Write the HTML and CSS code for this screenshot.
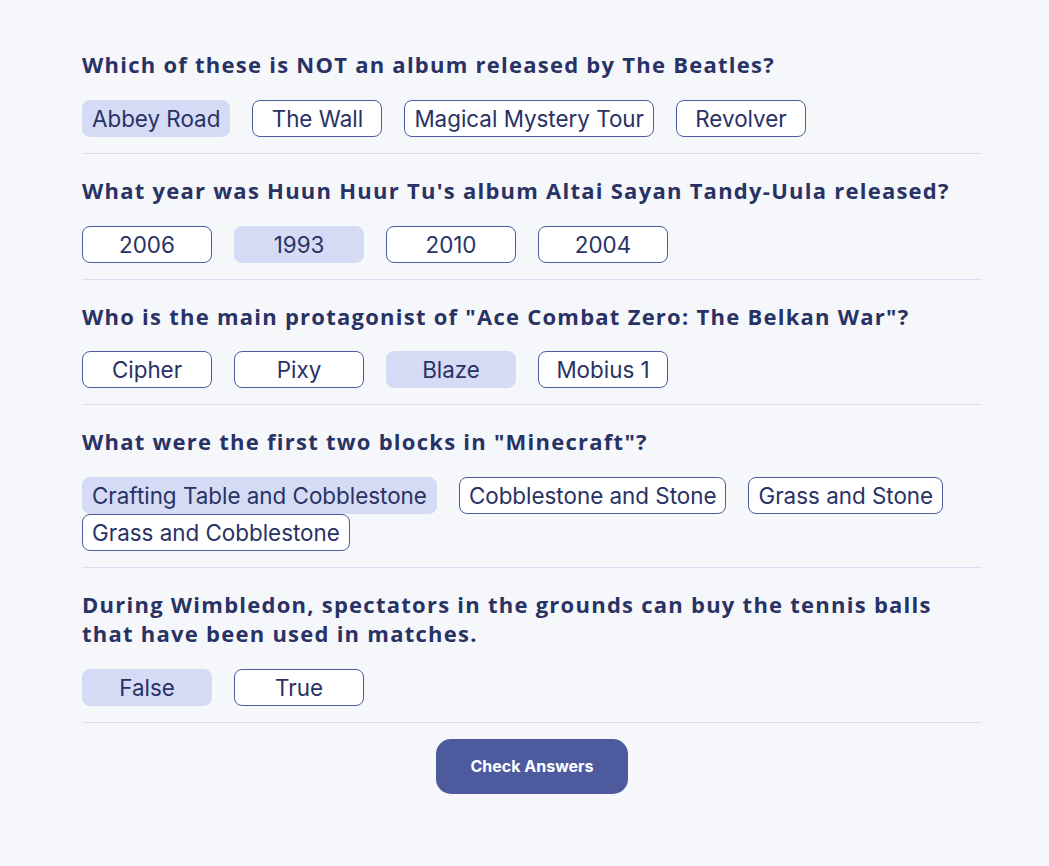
FILE: index.html
```html
<!DOCTYPE html>
<html>
<head>
<meta charset="utf-8">
<link rel="stylesheet" href="styles.css">
</head>
<body>
<main class="quiz">
  <section class="question">
    <h2 class="question-title">Which of these is NOT an album released by The Beatles?</h2>
    <div class="answers">
      <button class="answer selected">Abbey Road</button>
      <button class="answer">The Wall</button>
      <button class="answer">Magical Mystery Tour</button>
      <button class="answer">Revolver</button>
    </div>
  </section>
  <section class="question">
    <h2 class="question-title">What year was Huun Huur Tu's album Altai Sayan Tandy-Uula released?</h2>
    <div class="answers">
      <button class="answer">2006</button>
      <button class="answer selected">1993</button>
      <button class="answer">2010</button>
      <button class="answer">2004</button>
    </div>
  </section>
  <section class="question">
    <h2 class="question-title">Who is the main protagonist of "Ace Combat Zero: The Belkan War"?</h2>
    <div class="answers">
      <button class="answer">Cipher</button>
      <button class="answer">Pixy</button>
      <button class="answer selected">Blaze</button>
      <button class="answer">Mobius 1</button>
    </div>
  </section>
  <section class="question">
    <h2 class="question-title">What were the first two blocks in "Minecraft"?</h2>
    <div class="answers">
      <button class="answer selected">Crafting Table and Cobblestone</button>
      <button class="answer">Cobblestone and Stone</button>
      <button class="answer">Grass and Stone</button>
      <button class="answer">Grass and Cobblestone</button>
    </div>
  </section>
  <section class="question">
    <h2 class="question-title">During Wimbledon, spectators in the grounds can buy the tennis balls that have been used in matches.</h2>
    <div class="answers">
      <button class="answer selected">False</button>
      <button class="answer">True</button>
    </div>
  </section>
  <div class="actions">
    <button class="check">Check Answers</button>
  </div>
</main>
</body>
</html>
```
FILE: styles.css
```css
html, body {
  margin: 0;
  padding: 0;
  background: #F5F7FB;
}
body {
  padding: 28px 0 0 82px;
  color: #293264;
}
.quiz {
  width: 900px;
}
.question {
  border-bottom: 1px solid #DBDEF0;
  padding: 22px 0 16px;
}
.question-title {
  font-family: "Open Sans", sans-serif;
  font-weight: 700;
  font-size: 22px;
  letter-spacing: 1.25px;
  line-height: 28.8px;
  margin: 0 0 21px;
  padding-right: 30px;
  color: #293264;
}
.answers {
  display: flex;
  flex-wrap: wrap;
  column-gap: 22px;
  row-gap: 0;
}
.answer {
  font-family: Inter, sans-serif;
  font-size: 22.4px;
  color: #293264;
  background: #fff;
  border: 1px solid #4D5B9E;
  border-radius: 8px;
  min-width: 130px;
  height: 37px;
  padding: 0 9px;
  line-height: 35px;
  cursor: pointer;
}
.answer.selected {
  background: #D6DBF5;
  border-color: #D6DBF5;
}
.actions {
  display: flex;
  justify-content: center;
  padding-top: 16px;
}
.check {
  font-family: Inter, sans-serif;
  font-weight: 700;
  font-size: 16px;
  color: #fff;
  background: #4D5B9E;
  border: none;
  border-radius: 15px;
  width: 192px;
  height: 55px;
  cursor: pointer;
}
```
